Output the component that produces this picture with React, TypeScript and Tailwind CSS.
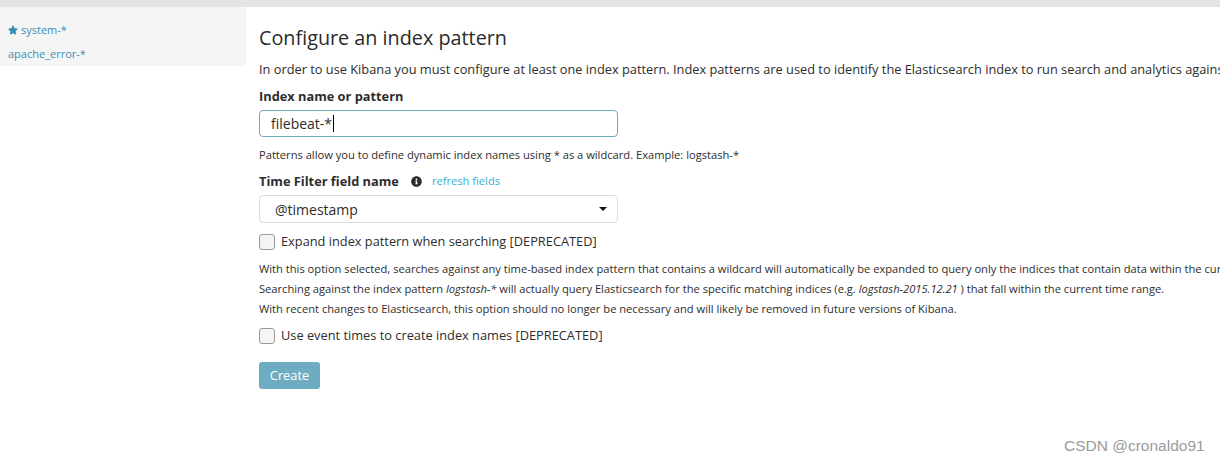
import { FaStar, FaInfoCircle } from 'react-icons/fa';

function Sidebar() {
  return (
    <div className="w-[246px] shrink-0">
      <div className="bg-[#f5f5f5] pt-[11px] text-[11px] text-[#3a8fb7]">
        <div className="flex h-[24px] items-center gap-[3px] px-[8px]">
          <FaStar className="h-[10px] w-[10px]" />
          <span>system-*</span>
        </div>
        <div className="flex h-[24px] items-center px-[8px]">apache_error-*</div>
      </div>
    </div>
  );
}

function Checkbox({ label }: { label: string }) {
  return (
    <label className="flex items-center gap-[6px] text-[12.8px] text-[#2d2d2d]">
      <span className="h-[16px] w-[16px] rounded-[3px] border border-[#9a9a9a] bg-[#f4f4f4]" />
      <span>{label}</span>
    </label>
  );
}

export default function App() {
  return (
    <div
      className="h-[461px] w-[1220px] overflow-hidden bg-white text-[#2d2d2d]"
      style={{ fontFamily: '"Open Sans", "Noto Sans", sans-serif' }}
    >
      <div className="h-[7px] bg-[#e4e4e4]" />
      <div className="flex">
        <Sidebar />
        <div className="whitespace-nowrap pl-[13px]">
          <h1 className="mt-[18px] text-[19.8px] leading-[26px] text-[#2b2b2b]">Configure an index pattern</h1>
          <p className="mt-[8px] text-[12.8px] leading-[20px]">
            In order to use Kibana you must configure at least one index pattern. Index patterns are used to identify the
            Elasticsearch index to run search and analytics against. They are also used to configure fields.
          </p>
          <div className="mt-[7px] text-[12.8px] font-bold leading-[20px]">Index name or pattern</div>
          <div className="mt-[4px] flex h-[27px] w-[359px] items-center rounded-[4px] border border-[#6eadc1] px-[11px] text-[14px]">
            filebeat-*<span className="ml-[1px] h-[17px] w-[1px] bg-black" />
          </div>
          <p className="mt-[10px] text-[11.15px] leading-[16px]">
            Patterns allow you to define dynamic index names using * as a wildcard. Example: logstash-*
          </p>
          <div className="mt-[8px] flex items-center text-[12.8px] leading-[20px]">
            <span className="font-bold">Time Filter field name</span>
            <FaInfoCircle className="ml-[12px] h-[11px] w-[11px] text-[#2d2d2d]" />
            <span className="ml-[10px] text-[11.15px] text-[#3caed2]">refresh fields</span>
          </div>
          <div className="mt-[4px] flex h-[28px] w-[359px] items-center justify-between rounded-[4px] border border-[#dcdcdc] pl-[15px] pr-[10px] text-[14px]">
            <span>@timestamp</span>
            <span className="h-0 w-0 border-x-[4px] border-t-[4px] border-x-transparent border-t-[#111]" />
          </div>
          <div className="mt-[9px]">
            <Checkbox label="Expand index pattern when searching [DEPRECATED]" />
          </div>
          <div className="mt-[8px] text-[11.15px] leading-[20px]">
            <p>
              With this option selected, searches against any time-based index pattern that contains a wildcard will
              automatically be expanded to query only the indices that contain data within the currently selected time range.
            </p>
            <p>
              Searching against the index pattern <i>logstash-*</i> will actually query Elasticsearch for the specific matching
              indices (e.g. <i>logstash-2015.12.21</i> ) that fall within the current time range.
            </p>
            <p>
              With recent changes to Elasticsearch, this option should no longer be necessary and will likely be removed in
              future versions of Kibana.
            </p>
          </div>
          <div className="mt-[7px]">
            <Checkbox label="Use event times to create index names [DEPRECATED]" />
          </div>
          <button className="mt-[17px] h-[27px] w-[61px] rounded-[3px] bg-[#6eadc1] text-[12.8px] text-white">Create</button>
        </div>
      </div>
      <div
        className="absolute left-[1064px] top-[434px] text-[15.5px] text-[#9a9a9a]"
        style={{ fontFamily: '"Liberation Sans", Arial, sans-serif' }}
      >
        CSDN @cronaldo91
      </div>
    </div>
  );
}
